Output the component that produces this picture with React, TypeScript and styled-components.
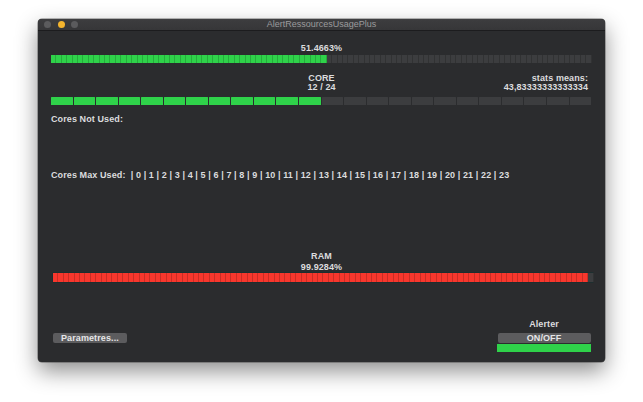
import React from "react";
import styled, { createGlobalStyle } from "styled-components";

const Global = createGlobalStyle`
  html, body { margin: 0; padding: 0; background: #ffffff; }
  body { font-family: "Liberation Sans", Arial, sans-serif; }
`;

const Page = styled.div`
  width: 643px;
  height: 402px;
  padding: 19px 0 0 38px;
  box-sizing: border-box;
  overflow: hidden;
`;

const Window = styled.div`
  width: 567px;
  height: 343px;
  background: #2b2c2e;
  border-radius: 4px;
  box-shadow: 0 9px 22px rgba(0, 0, 0, 0.45), 0 0 0 0.5px rgba(0, 0, 0, 0.5);
  display: flex;
  flex-direction: column;
  overflow: hidden;
`;

const TitleBar = styled.div`
  height: 11px;
  background: linear-gradient(#3d3d3f, #363638);
  border-bottom: 1px solid #1c1c1e;
  position: relative;
  display: flex;
  align-items: center;
  justify-content: center;
`;

const Lights = styled.div`
  position: absolute;
  left: 6px;
  top: 2px;
  display: flex;
  gap: 6.5px;
`;

const Light = styled.span<{ $c: string }>`
  width: 7px;
  height: 7px;
  border-radius: 50%;
  background: ${(p) => p.$c};
`;

const Title = styled.div`
  font-size: 9px;
  line-height: 11px;
  color: #9b9b9d;
`;

const Content = styled.div`
  flex: 1;
  padding: 12px 13px 10px 13px;
  display: flex;
  flex-direction: column;
  color: #dcdcde;
  font-size: 9px;
  font-weight: bold;
  letter-spacing: 0.1px;
`;

const Label = styled.div<{ $mt?: number; $lh?: number }>`
  text-align: center;
  line-height: ${(p) => p.$lh ?? 10}px;
  margin-top: ${(p) => p.$mt ?? 0}px;
  white-space: pre;
`;

const LeftLabel = styled(Label)`
  text-align: left;
`;

const Bar = styled.div<{ $mt?: number; $h: number; $gap?: number; $outline?: boolean }>`
  display: flex;
  height: ${(p) => p.$h}px;
  margin-top: ${(p) => p.$mt ?? 0}px;
  gap: ${(p) => p.$gap ?? 0}px;
  ${(p) => (p.$outline ? "box-shadow: 0 0 0 0.5px #123030;" : "")}
`;

const Seg = styled.div<{ $on: boolean; $on_c: string; $line?: boolean }>`
  flex: 1;
  background: ${(p) => (p.$on ? p.$on_c : "#3c3d3f")};
  ${(p) => (p.$line ? "box-shadow: inset -1px 0 0 rgba(0,0,0,0.18);" : "border-radius: 0.5px;")}
`;

const CoreHeader = styled.div`
  display: grid;
  grid-template-columns: 1fr auto 1fr;
  margin-top: 11px;
  line-height: 9px;
`;

const Center = styled.div`
  text-align: center;
`;

const Right = styled.div`
  text-align: right;
  padding-right: 4px;
`;

const CoreBar = styled(Bar)`
  margin-right: 1px;
`;

const RamBar = styled(Bar)`
  margin-left: 2px;
  margin-right: -1px;
`;

const Bottom = styled.div`
  margin-top: 37px;
  display: flex;
  justify-content: space-between;
  align-items: flex-end;
`;

const Button = styled.div<{ $w: number }>`
  width: ${(p) => p.$w}px;
  height: 10px;
  line-height: 10px;
  border-radius: 2px;
  background: #5c5c5e;
  color: #e6e6e8;
  font-size: 9px;
  font-weight: bold;
  text-align: center;
`;

const ParamButton = styled(Button)`
  margin-left: 2px;
  margin-bottom: 9px;
  text-align: left;
  padding-left: 8px;
  box-sizing: border-box;
`;

const AlertCol = styled.div`
  display: flex;
  flex-direction: column;
  align-items: center;
  margin-right: 1px;
`;

const OnOff = styled(Button)`
  margin-top: 4px;
`;

const GreenBar = styled.div`
  width: 94px;
  height: 8px;
  margin-top: 1px;
  background: #2fd24a;
`;

const GREEN = "#2fd24a";
const RED = "#f8372d";

function segs(n: number, filled: number, color: string, line: boolean) {
  return Array.from({ length: n }, (_, i) => (
    <Seg key={i} $on={i < filled} $on_c={color} $line={line} />
  ));
}

const cores = Array.from({ length: 24 }, (_, i) => i).join(" | ");

export default function App() {
  return (
    <>
      <Global />
      <Page>
        <Window>
          <TitleBar>
            <Lights>
              <Light $c="#5b5b5d" />
              <Light $c="#f5b52e" />
              <Light $c="#5b5b5d" />
            </Lights>
            <Title>AlertRessourcesUsagePlus</Title>
          </TitleBar>
          <Content>
            <Label>51.4663%</Label>
            <Bar $mt={2} $h={8}>
              {segs(100, 51, GREEN, true)}
            </Bar>
            <CoreHeader>
              <div />
              <Center>
                CORE
                <br />
                12 / 24
              </Center>
              <Right>
                stats means:
                <br />
                43,83333333333334
              </Right>
            </CoreHeader>
            <CoreBar $mt={5} $h={8} $gap={1}>
              {segs(24, 12, GREEN, false)}
            </CoreBar>
            <LeftLabel $mt={9}>Cores Not Used:</LeftLabel>
            <LeftLabel $mt={46}>{"Cores Max Used:  | " + cores}</LeftLabel>
            <Label $mt={71} $lh={11}>RAM</Label>
            <Label $lh={11}>99.9284%</Label>
            <RamBar $h={9} $outline>
              {segs(100, 99, RED, true)}
            </RamBar>
            <Bottom>
              <ParamButton $w={74}>Parametres...</ParamButton>
              <AlertCol>
                <Label>Alerter</Label>
                <OnOff $w={93}>ON/OFF</OnOff>
                <GreenBar />
              </AlertCol>
            </Bottom>
          </Content>
        </Window>
      </Page>
    </>
  );
}
